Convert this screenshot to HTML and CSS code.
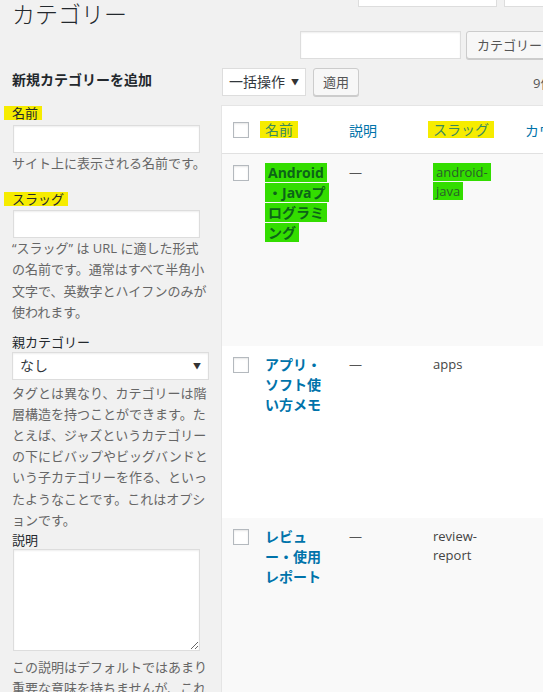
FILE: index.html
```html
<!DOCTYPE html>
<html lang="ja">
<head>
    <meta charset="UTF-8">
    <meta name="viewport" content="width=device-width, initial-scale=1.0">
    <title>カテゴリー</title>
    <link rel="stylesheet" href="styles.css">
</head>
<body>

<div class="page">
    <!-- タイトルと上部の入力欄 -->
    <div class="head">
        <h1 class="page-title">カテゴリー</h1>
        <div class="top-box"></div>
        <div class="top-box"></div>
    </div>

    <div class="search">
        <input type="text" class="search-input">
        <button class="btn btn-search">カテゴリーを検索</button>
    </div>

    <div class="columns">
        <!-- 新規カテゴリー追加フォーム -->
        <div class="col-left">
            <h2 class="form-title">新規カテゴリーを追加</h2>

            <div class="field field-name">
                <label class="field-label"><span class="mark">名前</span></label>
                <input type="text" class="text-input">
                <p class="desc">サイト上に表示される名前です。</p>
            </div>

            <div class="field field-slug">
                <label class="field-label"><span class="mark">スラッグ</span></label>
                <input type="text" class="text-input">
                <p class="desc">“スラッグ” は URL に適した形式の名前です。通常はすべて半角小文字で、英数字とハイフンのみが使われます。</p>
            </div>

            <div class="field field-parent">
                <label class="field-label">親カテゴリー</label>
                <div class="fake-select">なし <span class="arrow">▼</span></div>
                <p class="desc desc-parent">タグとは異なり、カテゴリーは階層構造を持つことができます。たとえば、ジャズというカテゴリーの下にビバップやビッグバンドという子カテゴリーを作る、といったようなことです。これはオプションです。</p>
            </div>

            <div class="field field-desc">
                <label class="field-label">説明</label>
                <textarea class="textarea"></textarea>
                <p class="desc desc-last">この説明はデフォルトではあまり重要な意味を持ちませんが、これを表示するテーマも中にはあります。</p>
            </div>
        </div>

        <!-- カテゴリー一覧 -->
        <div class="col-right">
            <div class="tablenav">
                <div class="bulk">一括操作 <span class="arrow">▼</span></div>
                <button class="btn btn-apply">適用</button>
                <span class="num">9件の項目</span>
            </div>

            <table class="cat-table">
                <colgroup>
                    <col class="c-check">
                    <col class="c-name">
                    <col class="c-desc">
                    <col class="c-slug">
                    <col class="c-count">
                </colgroup>
                <thead>
                    <tr>
                        <th class="check"><span class="cb"></span></th>
                        <th class="col-name"><span class="mark-y">名前</span></th>
                        <th>説明</th>
                        <th class="col-slug"><span class="mark-y">スラッグ</span></th>
                        <th>カウント</th>
                    </tr>
                </thead>
                <tbody>
                    <tr class="alt row-1">
                        <td class="check"><span class="cb"></span></td>
                        <td class="col-name"><a class="row-title green">Android<wbr>・Javaプログラミング</a></td>
                        <td class="col-desc">—</td>
                        <td class="col-slug"><span class="green slug-green">android-java</span></td>
                        <td></td>
                    </tr>
                    <tr class="row-2">
                        <td class="check"><span class="cb"></span></td>
                        <td class="col-name"><a class="row-title">アプリ・ソフト使い方メモ</a></td>
                        <td class="col-desc">—</td>
                        <td class="col-slug">apps</td>
                        <td></td>
                    </tr>
                    <tr class="alt row-3">
                        <td class="check"><span class="cb"></span></td>
                        <td class="col-name"><a class="row-title">レビュー・使用レポート</a></td>
                        <td class="col-desc">—</td>
                        <td class="col-slug">review-report</td>
                        <td></td>
                    </tr>
                </tbody>
            </table>
        </div>
    </div>
</div>

</body>
</html>
```

FILE: styles.css
```css
body {
    margin: 0;
    background-color: #f1f1f1;
    color: #444;
    font-family: "Open Sans", "Noto Sans CJK JP", sans-serif;
    font-size: 13px;
    overflow: hidden;
}

.page {
    width: 543px;
    height: 692px;
    overflow: hidden;
    padding-left: 12px;
    box-sizing: border-box;
}

/* 上部 */
.head {
    display: grid;
    grid-template-columns: 339px 139px 100px;
    column-gap: 7px;
    align-items: start;
}

.page-title {
    margin: 0;
    font-size: 23px;
    font-weight: 300;
    line-height: 29px;
    color: #23282d;
}

.top-box {
    height: 28px;
    margin-top: -21px;
    background-color: white;
    border: 1px solid #ddd;
    box-sizing: border-box;
}

.search {
    display: flex;
    gap: 5px;
    margin: 2px 0 0 288px;
    width: 300px;
}

.search-input {
    width: 161px;
    height: 28px;
    flex: none;
    box-sizing: border-box;
    border: 1px solid #ddd;
    box-shadow: inset 0 1px 2px rgba(0,0,0,0.07);
    background: white;
}

.btn {
    height: 28px;
    padding: 0 10px;
    border: 1px solid #ccc;
    border-radius: 3px;
    background-color: #f7f7f7;
    box-shadow: 0 1px 0 #ccc;
    color: #555;
    font-family: "Open Sans", "Noto Sans CJK JP", sans-serif;
    font-size: 13px;
    line-height: 26px;
    white-space: nowrap;
    flex: none;
}

.btn-search {
    width: 110px;
    text-align: left;
}

/* 2カラム */
.columns {
    display: flex;
    gap: 12px;
    margin-top: 9px;
}

.col-left {
    width: 197px;
    flex: none;
}

.col-right {
    width: 420px;
    flex: none;
}

.form-title {
    margin: 0;
    font-size: 14px;
    font-weight: 700;
    line-height: 24px;
    color: #23282d;
}

.field-label {
    display: block;
    line-height: 20px;
    color: #23282d;
}

.mark {
    display: inline-block;
    line-height: 14px;
    padding: 0 4px 0 8px;
    margin-left: -8px;
    background-color: #f6ec00;
}

.text-input {
    display: block;
    width: 187px;
    height: 28px;
    margin: 2px 0 0 1px;
    box-sizing: border-box;
    border: 1px solid #ddd;
    box-shadow: inset 0 1px 2px rgba(0,0,0,0.07);
    background: white;
}

.desc {
    margin: 0;
    line-height: 21.5px;
    color: #666;
}

.field-name {
    margin-top: 11px;
}

.field-slug {
    margin-top: 14px;
}

.field-slug .text-input {
    margin-top: 1px;
}

.field-parent {
    margin-top: 8px;
}

.fake-select {
    height: 28px;
    box-sizing: border-box;
    border: 1px solid #ddd;
    background: white;
    box-shadow: inset 0 1px 2px rgba(0,0,0,0.07);
    padding: 0 7px;
    line-height: 26px;
    font-size: 14px;
    color: #32373c;
    display: flex;
    justify-content: space-between;
}

.arrow {
    font-size: 8px;
    color: #333;
}

.desc-parent {
    margin-top: 3px;
    line-height: 21.2px;
}

.field-desc {
    margin-top: 0;
}

.field-desc .field-label {
    line-height: 18px;
}

.textarea {
    display: block;
    width: 187px;
    height: 102px;
    margin: 0 0 0 1px;
    box-sizing: border-box;
    border: 1px solid #ddd;
    box-shadow: inset 0 1px 2px rgba(0,0,0,0.07);
    background: white;
}

.desc-last {
    margin-top: 6px;
}

/* 一覧 */
.tablenav {
    display: flex;
    align-items: center;
    height: 28px;
}

.bulk {
    width: 84px;
    height: 28px;
    box-sizing: border-box;
    border: 1px solid #ddd;
    background: white;
    padding: 0 6px;
    line-height: 26px;
    font-size: 14px;
    color: #32373c;
    margin-left: 1px;
    display: flex;
    justify-content: space-between;
}

.btn-apply {
    width: 46px;
    padding: 0;
    margin-left: 7px;
    text-align: center;
}

.num {
    margin-left: 174px;
    white-space: nowrap;
    color: #555;
}

.cat-table {
    margin-top: 9px;
    width: 400px;
    table-layout: fixed;
    border-spacing: 0;
    border: 1px solid #e5e5e5;
    border-right: none;
    background: white;
}

.c-check { width: 35px; }
.c-name { width: 84px; }
.c-desc { width: 84px; }
.c-slug { width: 92px; }
.c-count { width: 105px; }

.cat-table th {
    height: 47px;
    padding: 0 8px;
    border-bottom: 1px solid #e1e1e1;
    text-align: left;
    font-weight: 400;
    font-size: 14px;
    color: #0073aa;
    white-space: nowrap;
    vertical-align: middle;
}

.cat-table th.check {
    padding: 0 0 0 11px;
}

.cat-table td {
    padding: 9px 8px;
    vertical-align: top;
    line-height: 19px;
}

.cat-table td.check {
    padding: 11px 0 0 11px;
}

.cat-table td.col-name {
    padding-right: 14px;
}

.cat-table td.col-slug {
    padding-right: 24px;
}

.cb {
    display: block;
    width: 16px;
    height: 16px;
    box-sizing: border-box;
    border: 1px solid #b4b9be;
    background: white;
    box-shadow: inset 0 1px 2px rgba(0,0,0,0.1);
}

.mark-y {
    display: inline-block;
    line-height: 17px;
    padding: 0 5px;
    margin-left: -5px;
    background-color: #f6ec00;
    color: #3d8a5c;
}

.alt {
    background-color: #f9f9f9;
}

.row-1 { height: 192px; }
.row-2 { height: 172px; background-color: white; }
.row-3 { height: 200px; }

.row-title {
    font-size: 14px;
    font-weight: 700;
    color: #0073aa;
}

.green {
    background-color: #33dd00;
    color: #0c6418;
    padding: 0 3px;
    box-decoration-break: clone;
    -webkit-box-decoration-break: clone;
}

.slug-green {
    color: #2a5e2a;
}

.col-desc {
    color: #555;
}
```
